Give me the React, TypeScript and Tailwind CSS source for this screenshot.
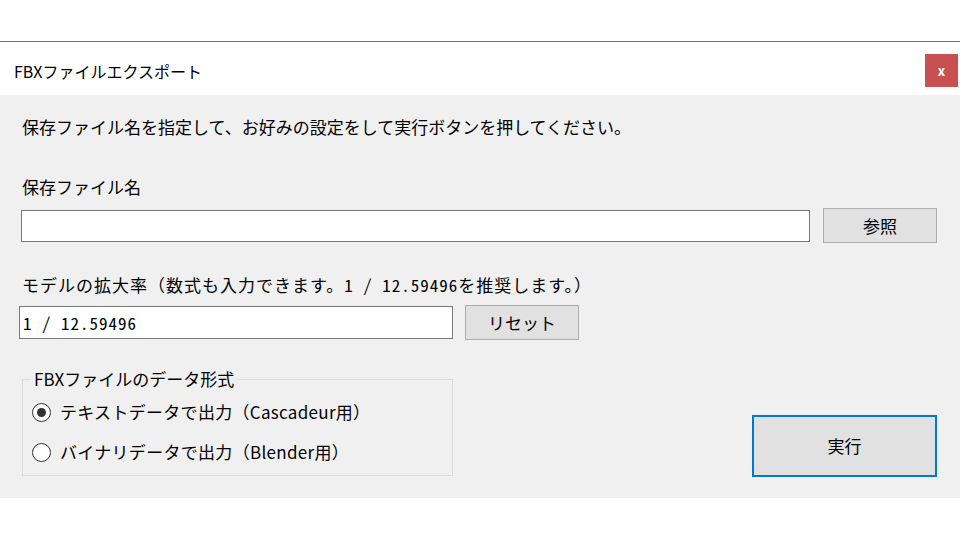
import { useState } from "react";

const font = { fontFamily: '"Noto Sans CJK JP", "Noto Sans", sans-serif' };

function Radio({ checked, label, onClick }: { checked: boolean; label: string; onClick: () => void }) {
  return (
    <div className="flex items-center h-[24px] cursor-default" onClick={onClick}>
      <div className="w-[19px] h-[19px] rounded-full border border-[#333333] bg-white flex items-center justify-center">
        {checked && <div className="w-[9px] h-[9px] rounded-full bg-[#333333]" />}
      </div>
      <span className="ml-[9px] text-[17px] leading-[24px] tracking-[0.3px] text-black">{label}</span>
    </div>
  );
}

export default function App() {
  const [mode, setMode] = useState<"text" | "binary">("text");
  const [fileName, setFileName] = useState("");
  const [scale, setScale] = useState("1 / 12.59496");

  return (
    <div className="w-[960px] h-[540px] bg-white flex flex-col text-black" style={font}>
      <div className="h-[41px] shrink-0" />
      <div className="h-px bg-[#707070] shrink-0" />

      {/* title bar */}
      <div className="h-[53px] shrink-0 flex items-center justify-between pl-[14px] pr-[2px]">
        <span className="text-[16px] leading-[22px] mt-[4px]">FBXファイルエクスポート</span>
        <button className="w-[33px] h-[33px] bg-[#c75050] text-white text-[13px] font-bold leading-none flex items-center justify-center mt-[3px]">
          x
        </button>
      </div>

      {/* body */}
      <div className="h-[403px] shrink-0 bg-[#f0f0f0] pl-[21px] pr-[23px] pt-[20px] flex flex-col">
        <p className="text-[17px] leading-[24px] pl-px">
          保存ファイル名を指定して、お好みの設定をして実行ボタンを押してください。
        </p>

        <p className="text-[17px] leading-[24px] pl-px mt-[36px]">保存ファイル名</p>
        <div className="flex items-center justify-between h-[35px] mt-[9px]">
          <input
            value={fileName}
            onChange={(e) => setFileName(e.target.value)}
            className="w-[789px] h-[32px] bg-white border border-[#7a7a7a] px-[4px] text-[17px] outline-none"
          />
          <button className="w-[114px] h-[35px] bg-[#e1e1e1] border border-[#adadad] text-[17px]">参照</button>
        </div>

        <p className="text-[17px] leading-[24px] pl-px mt-[30px] tracking-[1px]">
          モデルの拡大率（数式も入力できます。
          <span className="[font-feature-settings:'hwid']">1 / 12.59496</span>
          を推奨します。）
        </p>
        <div className="flex items-center h-[35px] mt-[8px]">
          <input
            value={scale}
            onChange={(e) => setScale(e.target.value)}
            className="w-[434px] h-[33px] ml-[-2px] bg-white border border-[#7a7a7a] px-[3px] text-[17px] leading-[24px] outline-none [font-feature-settings:'hwid'] tracking-[1px]"
          />
          <button className="w-[114px] h-[35px] ml-[12px] bg-[#e1e1e1] border border-[#adadad] text-[17px]">
            リセット
          </button>
        </div>

        <div className="flex items-end justify-between mt-[39px]">
          <div className="relative w-[431px] h-[97px] ml-px border border-[#dcdcdc] pl-[9px] pt-[20px] flex flex-col gap-[16px]">
            <span className="absolute left-[8px] top-[-13px] px-[3px] bg-[#f0f0f0] text-[17px] leading-[24px]">
              FBXファイルのデータ形式
            </span>
            <Radio
              checked={mode === "text"}
              label="テキストデータで出力（Cascadeur用）"
              onClick={() => setMode("text")}
            />
            <Radio
              checked={mode === "binary"}
              label="バイナリデータで出力（Blender用）"
              onClick={() => setMode("binary")}
            />
          </div>
          <button className="w-[185px] h-[62px] mb-[-1px] bg-[#e1e1e1] border-2 border-[#0078d7] text-[17px]">
            実行
          </button>
        </div>
      </div>

      <div className="flex-1" />
    </div>
  );
}
